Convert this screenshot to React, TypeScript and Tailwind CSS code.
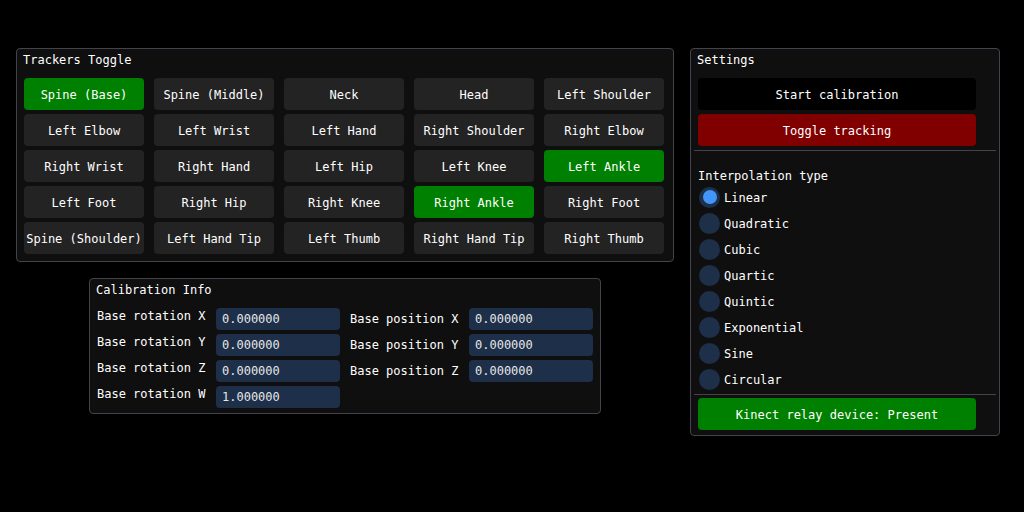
import React from "react";

const trackers: { name: string; on?: boolean }[] = [
  { name: "Spine (Base)", on: true },
  { name: "Spine (Middle)" },
  { name: "Neck" },
  { name: "Head" },
  { name: "Left Shoulder" },
  { name: "Left Elbow" },
  { name: "Left Wrist" },
  { name: "Left Hand" },
  { name: "Right Shoulder" },
  { name: "Right Elbow" },
  { name: "Right Wrist" },
  { name: "Right Hand" },
  { name: "Left Hip" },
  { name: "Left Knee" },
  { name: "Left Ankle", on: true },
  { name: "Left Foot" },
  { name: "Right Hip" },
  { name: "Right Knee" },
  { name: "Right Ankle", on: true },
  { name: "Right Foot" },
  { name: "Spine (Shoulder)" },
  { name: "Left Hand Tip" },
  { name: "Left Thumb" },
  { name: "Right Hand Tip" },
  { name: "Right Thumb" },
];

const interp = ["Linear", "Quadratic", "Cubic", "Quartic", "Quintic", "Exponential", "Sine", "Circular"];

const calRows = [
  { rot: "Base rotation X", rv: "0.000000", pos: "Base position X", pv: "0.000000" },
  { rot: "Base rotation Y", rv: "0.000000", pos: "Base position Y", pv: "0.000000" },
  { rot: "Base rotation Z", rv: "0.000000", pos: "Base position Z", pv: "0.000000" },
  { rot: "Base rotation W", rv: "1.000000" },
];

/* ── Small pieces ─────────────────────────────────────────── */
const Title = ({ children }: { children: React.ReactNode }) => (
  <div className="h-[20px] pt-[1px] leading-[20px] pl-[6px] text-white">{children}</div>
);

const Field = ({ value }: { value: string }) => (
  <div className="w-[124px] h-[22px] rounded-[4px] bg-[#1d2f49] pl-[6px] pt-[1px] leading-[21px] text-[#e6e6e6]">
    {value}
  </div>
);

const Btn = ({ bg, w, children }: { bg: string; w: string; children: React.ReactNode }) => (
  <div className={`${w} h-[32px] pt-[2px] rounded-[4px] ${bg} flex items-center justify-center whitespace-nowrap`}>
    {children}
  </div>
);

export default function App() {
  return (
    <div
      className="relative w-[1024px] h-[512px] bg-black text-white text-[12px] overflow-hidden"
      style={{ fontFamily: '"DejaVu Sans Mono", monospace' }}
    >
      {/* TRACKERS TOGGLE */}
      <div className="absolute left-[16px] top-[48px] w-[658px] h-[214px] rounded-[4px] border border-[#43434d] bg-[#0f0f0f]">
        <Title>Trackers Toggle</Title>
        <div className="mt-[9px] ml-[7px] grid grid-cols-[repeat(5,120px)] gap-x-[10px] gap-y-[4px]">
          {trackers.map((t) => (
            <Btn key={t.name} w="w-[120px]" bg={t.on ? "bg-[#008000]" : "bg-[#232323]"}>
              {t.name}
            </Btn>
          ))}
        </div>
      </div>

      {/* CALIBRATION INFO */}
      <div className="absolute left-[89px] top-[278px] w-[512px] h-[136px] rounded-[4px] border border-[#43434d] bg-[#0f0f0f]">
        <Title>Calibration Info</Title>
        <div className="mt-[9px] ml-[7px] flex flex-col gap-[4px]">
          {calRows.map((r) => (
            <div key={r.rot} className="flex h-[22px]">
              <div className="w-[119px] pt-[1px] leading-[14px]">{r.rot}</div>
              <Field value={r.rv} />
              {r.pos && (
                <>
                  <div className="ml-[10px] w-[119px] pt-[1px] leading-[21px]">{r.pos}</div>
                  <Field value={r.pv!} />
                </>
              )}
            </div>
          ))}
        </div>
      </div>

      {/* SETTINGS */}
      <div className="absolute left-[690px] top-[48px] w-[310px] h-[388px] rounded-[4px] border border-[#43434d] bg-[#0f0f0f]">
        <Title>Settings</Title>
        <div className="mt-[9px] ml-[7px] flex flex-col gap-[4px]">
          <Btn w="w-[278px]" bg="bg-black">Start calibration</Btn>
          <Btn w="w-[278px]" bg="bg-[#800000]">Toggle tracking</Btn>
        </div>
        <div className="mt-[4px] mx-[3px] h-px bg-[#43434d]" />
        <div className="mt-[18px] ml-[7px] leading-[14px]">Interpolation type</div>
        <div className="mt-[3px] ml-[7px] flex flex-col gap-[4px]">
          {interp.map((n, i) => (
            <div key={n} className="flex items-center h-[22px]">
              <div className="ml-[1px] w-[21px] h-[21px] rounded-full bg-[#1d2f49] flex items-center justify-center">
                {i === 0 && <div className="w-[14px] h-[14px] rounded-full bg-[#4296fa]" />}
              </div>
              <span className="ml-[4px] pt-[1px]">{n}</span>
            </div>
          ))}
        </div>
        <div className="mt-[4px] mx-[3px] h-px bg-[#43434d]" />
        <div className="mt-[3px] ml-[7px]">
          <Btn w="w-[278px]" bg="bg-[#008000]">Kinect relay device: Present</Btn>
        </div>
      </div>
    </div>
  );
}
